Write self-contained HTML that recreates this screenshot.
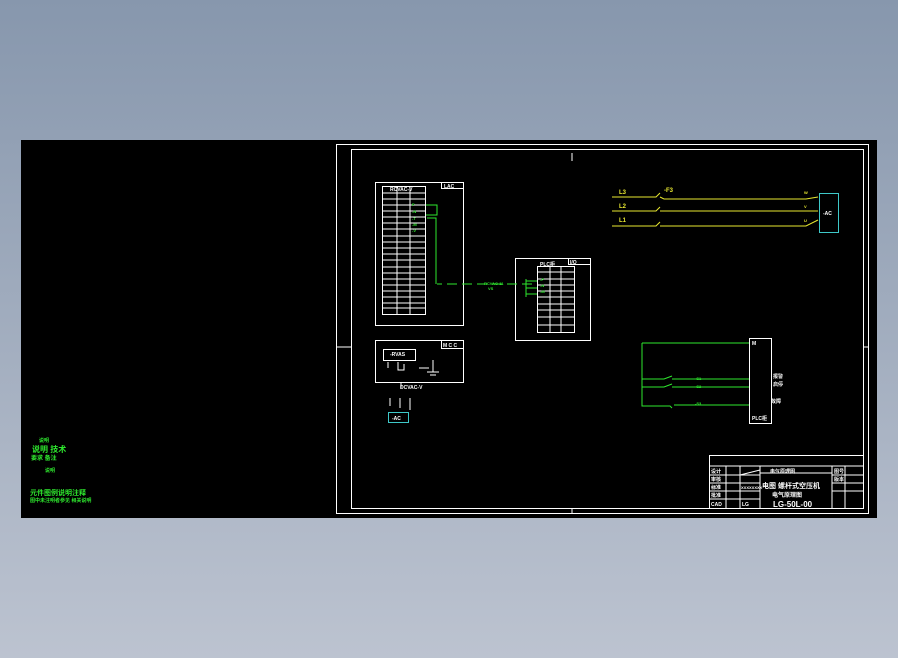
<!DOCTYPE html>
<html><head><meta charset="utf-8"><style>
html,body{margin:0;padding:0;width:898px;height:658px;overflow:hidden;background:linear-gradient(#8797ad,#bcc3d0);}
svg{position:absolute;left:0;top:0}
text{font-family:"Liberation Sans","Noto Sans CJK SC",sans-serif;font-weight:bold}
</style></head><body>
<svg width="898" height="658" viewBox="0 0 898 658">
<rect x="21" y="140" width="856" height="378" fill="#000"/>
<g fill="none" stroke="#fff" stroke-width="1">
<rect x="336.5" y="144.5" width="532" height="369"/>
<rect x="351.5" y="149.5" width="512" height="359"/>
<line x1="572" y1="153" x2="572" y2="161"/>
<line x1="336" y1="347" x2="351" y2="347"/>
<line x1="863" y1="347" x2="868" y2="347"/>
<line x1="572" y1="508" x2="572" y2="513"/>
<rect x="375.5" y="182.5" width="88" height="143"/>
<rect x="441.5" y="182.5" width="22" height="6"/>
<rect x="382.5" y="186.5" width="43" height="128"/>
<line x1="397" y1="186" x2="397" y2="314"/><line x1="410" y1="186" x2="410" y2="314"/>
<path d="M382 193H425M382 199H425M382 205H425M382 211H425M382 217H425M382 223H425M382 229H425M382 236H425M382 242H425M382 248H425M382 254H425M382 260H425M382 267H425M382 273H425M382 279H425M382 285H425M382 291H425M382 297H425M382 303H425M382 308H425"/>
<rect x="515.5" y="258.5" width="75" height="82"/>
<rect x="568.5" y="258.5" width="22" height="6"/>
<rect x="537.5" y="266.5" width="37" height="66"/>
<line x1="550" y1="266" x2="550" y2="332"/><line x1="561" y1="266" x2="561" y2="332"/>
<path d="M537 272H574M537 279H574M537 285H574M537 291H574M537 297H574M537 304H574M537 310H574M537 317H574M537 325H574"/>
<rect x="375.5" y="340.5" width="88" height="42"/>
<rect x="441.5" y="340.5" width="22" height="8"/>
<rect x="383.5" y="349.5" width="32" height="11"/>
<path d="M388 362v6M398 362v8h6v-6M419 368h10M433 360v12M427 372h12M430 375h6M401 382v6"/>
<rect x="749.5" y="338.5" width="22" height="85"/>
<rect x="709.5" y="455.5" width="154" height="53"/>
<path d="M709 466H863M709 475H760M709 483H760M709 491H760M709 499H760M726 466V508M740 466V508M760 466V508M760 473H832M832 466V508M845 466V508M832 475H863M832 483H863M832 491H863M740 475L760 470"/>
</g>
<g fill="#fff" font-size="5">
<text x="390" y="191">RCVAC-V</text><text x="444" y="188">LAC</text>
<text x="540" y="266">PLC柜</text><text x="570" y="264">I/O</text>
<text x="443" y="347">M C C</text><text x="390" y="356">-RVAS</text>
<text x="400" y="389">DCVAC-V</text>
<text x="752" y="345">M</text><text x="752" y="420">PLC柜</text>
<text x="773" y="378">报警</text><text x="773" y="386">启停</text><text x="771" y="403">故障</text>
<text x="711" y="473">设计</text><text x="711" y="481">审核</text><text x="711" y="489">标准</text><text x="711" y="497">批准</text><text x="711" y="506">CAD</text>
<text x="742" y="506">LG</text><text x="741" y="489" font-size="4">XXXXXXXX</text>
<text x="770" y="473">电气原理图</text>
<text x="834" y="473">图号</text><text x="834" y="481">版本</text>
<text x="762" y="488" font-size="7">电图 螺杆式空压机</text>
<text x="772" y="497" font-size="6">电气原理图</text>
<text x="773" y="507" font-size="8">LG-50L-00</text>
</g>
<g fill="none" stroke="#2ee82e" stroke-width="1">
<path d="M426 205h11v10h-11M427 218h9v66"/>
<path d="M437 284h5M447 284h10M462 284h10M477 284h10M492 284h10M507 284h10M522 284h10M537 284"/>
<path d="M526 279v18M526 288h11M526 281h11M526 294h11"/>
<path d="M642 343h107M642 343v63h28l2 2M642 379h22l8-3M642 387h22l8-3M672 379h77M672 387h77M674 405h75"/>
</g>
<g fill="#2ee82e" font-size="4">
<text x="412" y="206">P</text><text x="412" y="213">-N</text><text x="412" y="220">-T</text><text x="412" y="226">-M</text><text x="412" y="232">-V</text>
<text x="484" y="285">RCVAC-11</text><text x="488" y="290">VS</text>
<text x="540" y="281">-P</text><text x="540" y="287">-N</text><text x="540" y="293">-M</text>
<text x="695" y="380">-S1</text><text x="695" y="388">-S2</text><text x="695" y="405">-S3</text>
<text x="39" y="442" font-size="5">说明</text><text x="32" y="452" font-size="8">说明 技术</text><text x="31" y="460" font-size="6">要求 备注</text>
<text x="45" y="472" font-size="5">说明</text>
<text x="30" y="495" font-size="7">元件图例说明注释</text><text x="30" y="502" font-size="5">图中未注明者参见 相关说明</text>
</g>
<g fill="none" stroke="#e8e830" stroke-width="1">
<path d="M612 197h44l4-4M612 211h44l4-4M612 226h44l4-4M660 197l4 2h142l12 -2M660 211l4 0h142h12M660 226l4 0h142l12 -6"/>
</g>
<g fill="#e8e830" font-size="6">
<text x="619" y="194">L3</text><text x="619" y="208">L2</text><text x="619" y="222">L1</text>
<text x="664" y="192">-F3</text>
<text x="804" y="194" font-size="4">W</text><text x="804" y="208" font-size="4">V</text><text x="804" y="222" font-size="4">U</text>
</g>
<rect x="819.5" y="193.5" width="19" height="39" fill="none" stroke="#3ec8c8"/>
<text x="823" y="215" fill="#fff" font-size="5">-AC</text>
<rect x="388.5" y="412.5" width="20" height="10" fill="none" stroke="#3ec8c8"/>
<text x="392" y="420" fill="#fff" font-size="5">-AC</text>
<path d="M390 398v8M400 398v10M410 398v12" stroke="#fff" fill="none"/>
</svg>
</body></html>
